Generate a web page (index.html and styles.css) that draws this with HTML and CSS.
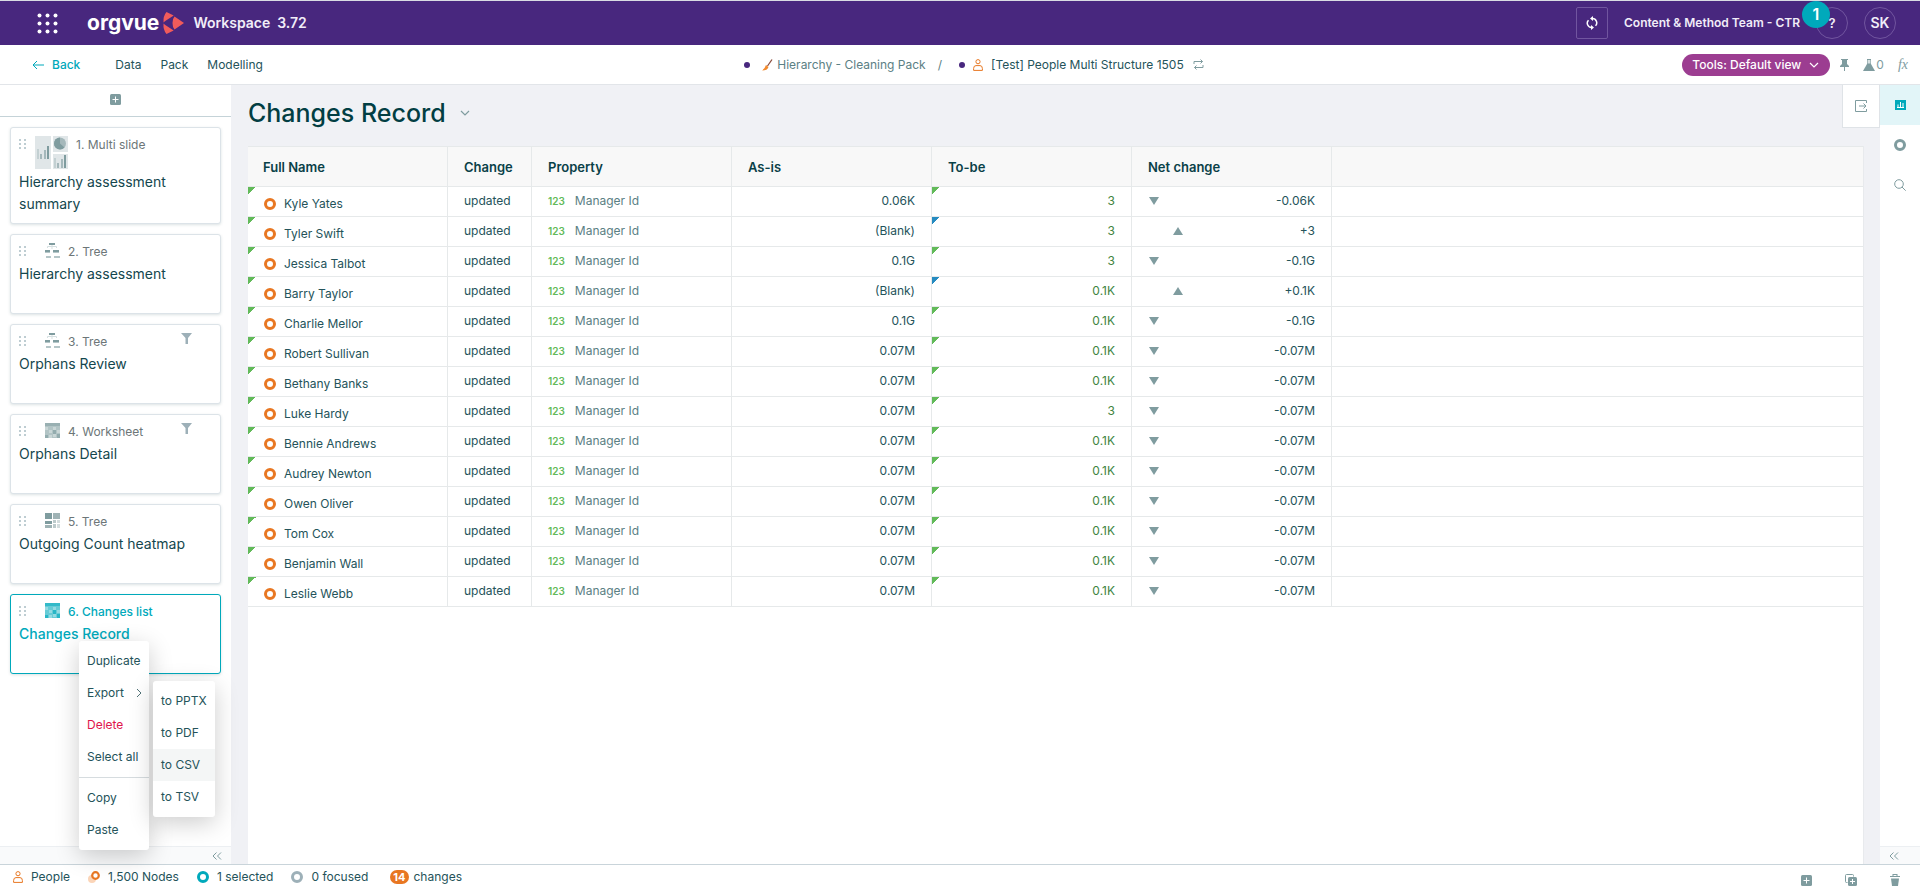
FILE: index.html
```html
<!DOCTYPE html>
<html lang="en">
<head>
<meta charset="utf-8">
<title>Changes Record - Workspace</title>
<link rel="stylesheet" href="styles.css">
</head>
<body>
<svg class="defs" aria-hidden="true">
  <symbol id="person" viewBox="0 0 10 12"><g fill="none" stroke="#e87722"><circle cx="5" cy="2.7" r="2.1"/><path d="M.6 11.4V9.6Q.6 6.6 3 6.6h4q2.400 0 2.400 3v1.800z"/></g></symbol>
  <symbol id="grip" viewBox="0 0 7 10"><g fill="#a9bcc3"><circle cx="1" cy="1" r="1"/><circle cx="6" cy="1" r="1"/><circle cx="1" cy="5" r="1"/><circle cx="6" cy="5" r="1"/><circle cx="1" cy="9" r="1"/><circle cx="6" cy="9" r="1"/></g></symbol>
  <symbol id="plus" viewBox="0 0 11 11"><rect width="11" height="11" rx="1.500" fill="#7f9c9f"/><path d="M5.500 2.500v6M2.500 5.500h6" stroke="#fff"/></symbol>
  <symbol id="tree" viewBox="0 0 15 15"><path d="M7 2v4M2.500 5V3.500h9V5" fill="none" stroke="#d5dfe0"/><path d="M4 0h6v2H4z" fill="#7f9c9f"/><path d="M0 7h5v2H0zM8 7h6v2H8z" fill="#7f9c9f"/><path d="M0 9h5v1H0zM8 9h6v1H8zM1 13h5v2H1zM9 13h6v2H9z" fill="#b5c6c8"/></symbol>
  <symbol id="funnel" viewBox="0 0 11 11"><path d="M0 0h11L7 5v6H4.500V5z" fill="#9db0b8"/></symbol>
  <symbol id="sheet" viewBox="0 0 15 15"><path d="M0 0h15v15H0z" fill="currentColor" opacity=".6"/><path d="M0 0h15v3H0z" fill="currentColor" opacity=".5"/><path d="M0 4h3v3H0zM4 7h3v3H4zM8 4h3v3H8zM12 7h3v3h-3zM8 11h3v3H8zM4 12h3v3H4z" fill="#fff" opacity=".3"/><path d="M8 7h3v4H8zM0 12h3v3H0zM12 11h3v4h-3z" fill="currentColor" opacity=".6"/></symbol>
  <symbol id="heat" viewBox="0 0 15 15"><path d="M0 0h7v6H0zM0 8h7v3H0z" fill="#7f9c9f"/><path d="M8 0h7v6H8zM0 12h7v3H0z" fill="#9fb3b5"/><path d="M8 7h3v3H8zM8 11h3v4H8z" fill="#bccacb"/><path d="M12 7h3v3h-3zM12 11h3v4h-3z" fill="#d3dcdd"/></symbol>
  <symbol id="laquo" viewBox="0 0 10 8"><path d="M4.500.5 1 4l3.500 3.500M9 .5 5.500 4 9 7.500" fill="none" stroke="#7f9c9f"/></symbol>
  <symbol id="chev" viewBox="0 0 10 6"><path d="M1 1l4 4 4-4" fill="none" stroke="currentColor" stroke-width="1.200"/></symbol>
</svg>

<header class="topbar">
  <button class="apps" aria-label="Apps"><svg width="21" height="21" viewBox="0 0 21 21" fill="#fff"><g id="dots"><circle cx="2.500" cy="2.500" r="2"/><circle cx="10.500" cy="2.500" r="2"/><circle cx="18.500" cy="2.500" r="2"/></g><use href="#dots" y="8"/><use href="#dots" y="16"/></svg></button>
  <a class="brand" href="#"><span>orgvue</span><svg width="21" height="22" viewBox="0 0 21 22" fill="#f15b5b"><path d="M3.500 0l7.200 3.600L3 8.500q-1.500 1-2.500 2Q0 4 3.500 0zM3.500 22l7.200-3.600L3 13.500q-1.500-1-2.500-2Q0 18 3.500 22zM11.500 4.500L21 11l-9.500 6.500Q9.500 15.500 9.500 11t2-6.500z"/></svg></a>
  <span class="product">Workspace</span><span class="version">3.72</span>
  <div class="account">
    <button class="square" aria-label="Refresh"><svg width="12" height="14" viewBox="0 0 12 14"><g fill="none" stroke="#fff" stroke-width="1.500"><path d="M6.500 2.500a4.300 4.300 0 0 1 3 7.300M5.500 11.500a4.300 4.300 0 0 1-3-7.300"/></g><path d="M7 0v5L4 2.500zM5 14V9l3 2.500z" fill="#fff"/></svg></button>
    <span class="team">Content &amp; Method Team - CTR</span>
    <button class="round">?<span class="notice">1</span></button>
    <button class="round initials">SK</button>
  </div>
</header>

<nav class="navbar">
  <div class="links">
    <a class="back" href="#"><svg width="12" height="10" viewBox="0 0 12 10"><path d="M12 5H1M5 1L1 5l4 4" fill="none" stroke="#00a9bb"/></svg>Back</a>
    <a href="#">Data</a><a href="#">Pack</a><a href="#">Modelling</a>
  </div>
  <div class="crumbs">
    <i class="dot"></i>
    <svg class="brush" width="11" height="12" viewBox="0 0 11 12"><path d="M10 .5L5.500 7" stroke="#8a4b3c" stroke-width="1.300"/><path d="M4 6l2.500 2Q5.500 11.500 0 11.500 3 9.500 4 6z" fill="#f28a2e"/></svg>
    <a class="parent" href="#">Hierarchy - Cleaning Pack</a>
    <span class="slash">/</span>
    <i class="dot"></i>
    <svg class="dataset" width="10" height="12"><use href="#person"/></svg>
    <a class="current" href="#">[Test] People Multi Structure 1505</a>
    <svg width="11" height="11" viewBox="0 0 11 11" fill="none" stroke="#7f9c9f"><path d="M1 5V2.500h8.500M7.500.5l2 2-2 2M10 6v2.500H1.500M3.500 6.500l-2 2 2 2"/></svg>
  </div>
  <div class="tools">
    <button class="view">Tools: Default view<svg width="10" height="6"><use href="#chev"/></svg></button>
    <button aria-label="Pin"><svg width="9" height="12" viewBox="0 0 9 12" fill="#7f9c9f"><path d="M1 0h7v1H7v4l2 2v1H5v4H4V8H0V7l2-2V1H1z"/></svg></button>
    <button class="flask"><svg width="12" height="12" viewBox="0 0 12 12"><path d="M4 .5h4M4.800.5V5M7.200.5V5" stroke="#7f9c9f"/><path d="M4.300 4.500h3.400L12 12H0z" fill="#7f9c9f"/></svg>0</button>
    <button class="fx">fx</button>
  </div>
</nav>

<div class="workspace">
  <aside class="slides">
    <div class="add"><button aria-label="Add slide"><svg width="11" height="11"><use href="#plus"/></svg></button></div>
    <ol class="cards">
      <li class="card tall"><div class="meta"><svg class="grip" width="7" height="10"><use href="#grip"/></svg><svg width="33" height="33" viewBox="0 0 33 33"><path d="M0 0h16v33H0zM18 0h15v16H18zM18 18h15v15H18z" fill="#e0e6e8"/><circle cx="25" cy="7.500" r="6" fill="#a5b8bb"/><path d="M25 1.500a6 6 0 0 0 0 12z" fill="#7f9c9f"/><path d="M25 7.500l4.500 4A6 6 0 0 1 25 13.500z" fill="#7f9c9f"/><g id="bars"><path d="M2 13h2v10H2z" fill="#c3d0d2"/><path d="M5 18h2v5H5zM9 14h2v9H9z" fill="#a5b8bb"/><path d="M12 10h2v13h-2z" fill="#7f9c9f"/></g><use href="#bars" x="17" y="9"/></svg><span>1. Multi slide</span></div><h2>Hierarchy assessment summary</h2></li>
      <li class="card"><div class="meta"><svg class="grip" width="7" height="10"><use href="#grip"/></svg><svg class="type" width="15" height="15"><use href="#tree"/></svg><span>2. Tree</span></div><h2>Hierarchy assessment</h2></li>
      <li class="card"><div class="meta"><svg class="grip" width="7" height="10"><use href="#grip"/></svg><svg class="type" width="15" height="15"><use href="#tree"/></svg><span>3. Tree</span><svg class="funnel" width="11" height="11"><use href="#funnel"/></svg></div><h2>Orphans Review</h2></li>
      <li class="card"><div class="meta"><svg class="grip" width="7" height="10"><use href="#grip"/></svg><svg class="type" width="15" height="15"><use href="#sheet"/></svg><span>4. Worksheet</span><svg class="funnel" width="11" height="11"><use href="#funnel"/></svg></div><h2>Orphans Detail</h2></li>
      <li class="card"><div class="meta"><svg class="grip" width="7" height="10"><use href="#grip"/></svg><svg class="type" width="15" height="15"><use href="#heat"/></svg><span>5. Tree</span></div><h2>Outgoing Count heatmap</h2></li>
      <li class="card active"><div class="meta"><svg class="grip" width="7" height="10"><use href="#grip"/></svg><svg class="type" width="15" height="15"><use href="#sheet"/></svg><span>6. Changes list</span></div><h2>Changes Record</h2></li>
    </ol>
    <button class="collapse" aria-label="Collapse slides"><svg width="10" height="8"><use href="#laquo"/></svg></button>
  </aside>

  <main class="content">
    <div class="heading">
      <h1>Changes Record</h1>
      <button class="more" aria-label="Title menu"><svg width="10" height="6"><use href="#chev"/></svg></button>
      <button class="exit" aria-label="Open panel"><svg width="12" height="12" viewBox="0 0 12 12" fill="none" stroke="#7f9c9f"><path d="M11.500 3V.5H.5v11h11V9M4 6h7M8.500 3.500L11 6 8.500 8.500"/></svg></button>
    </div>
    <div class="sheet">
      <table>
        <colgroup><col class="c-name"><col class="c-change"><col class="c-wide"><col class="c-wide"><col class="c-wide"><col class="c-wide"><col></colgroup>
        <thead><tr><th>Full Name</th><th>Change</th><th>Property</th><th>As-is</th><th>To-be</th><th>Net change</th><td></td></tr></thead>
        <tbody>
          <tr><td class="name"><i class="ring"></i>Kyle Yates</td><td>updated</td><td class="prop"><b>123</b>Manager Id</td><td class="num">0.06K</td><td class="num to">3</td><td class="num net down">-0.06K</td><td></td></tr>
          <tr><td class="name"><i class="ring"></i>Tyler Swift</td><td>updated</td><td class="prop"><b>123</b>Manager Id</td><td class="num">(Blank)</td><td class="num to new">3</td><td class="num net up">+3</td><td></td></tr>
          <tr><td class="name"><i class="ring"></i>Jessica Talbot</td><td>updated</td><td class="prop"><b>123</b>Manager Id</td><td class="num">0.1G</td><td class="num to">3</td><td class="num net down">-0.1G</td><td></td></tr>
          <tr><td class="name"><i class="ring"></i>Barry Taylor</td><td>updated</td><td class="prop"><b>123</b>Manager Id</td><td class="num">(Blank)</td><td class="num to new">0.1K</td><td class="num net up">+0.1K</td><td></td></tr>
          <tr><td class="name"><i class="ring"></i>Charlie Mellor</td><td>updated</td><td class="prop"><b>123</b>Manager Id</td><td class="num">0.1G</td><td class="num to">0.1K</td><td class="num net down">-0.1G</td><td></td></tr>
          <tr><td class="name"><i class="ring"></i>Robert Sullivan</td><td>updated</td><td class="prop"><b>123</b>Manager Id</td><td class="num">0.07M</td><td class="num to">0.1K</td><td class="num net down">-0.07M</td><td></td></tr>
          <tr><td class="name"><i class="ring"></i>Bethany Banks</td><td>updated</td><td class="prop"><b>123</b>Manager Id</td><td class="num">0.07M</td><td class="num to">0.1K</td><td class="num net down">-0.07M</td><td></td></tr>
          <tr><td class="name"><i class="ring"></i>Luke Hardy</td><td>updated</td><td class="prop"><b>123</b>Manager Id</td><td class="num">0.07M</td><td class="num to">3</td><td class="num net down">-0.07M</td><td></td></tr>
          <tr><td class="name"><i class="ring"></i>Bennie Andrews</td><td>updated</td><td class="prop"><b>123</b>Manager Id</td><td class="num">0.07M</td><td class="num to">0.1K</td><td class="num net down">-0.07M</td><td></td></tr>
          <tr><td class="name"><i class="ring"></i>Audrey Newton</td><td>updated</td><td class="prop"><b>123</b>Manager Id</td><td class="num">0.07M</td><td class="num to">0.1K</td><td class="num net down">-0.07M</td><td></td></tr>
          <tr><td class="name"><i class="ring"></i>Owen Oliver</td><td>updated</td><td class="prop"><b>123</b>Manager Id</td><td class="num">0.07M</td><td class="num to">0.1K</td><td class="num net down">-0.07M</td><td></td></tr>
          <tr><td class="name"><i class="ring"></i>Tom Cox</td><td>updated</td><td class="prop"><b>123</b>Manager Id</td><td class="num">0.07M</td><td class="num to">0.1K</td><td class="num net down">-0.07M</td><td></td></tr>
          <tr><td class="name"><i class="ring"></i>Benjamin Wall</td><td>updated</td><td class="prop"><b>123</b>Manager Id</td><td class="num">0.07M</td><td class="num to">0.1K</td><td class="num net down">-0.07M</td><td></td></tr>
          <tr><td class="name"><i class="ring"></i>Leslie Webb</td><td>updated</td><td class="prop"><b>123</b>Manager Id</td><td class="num">0.07M</td><td class="num to">0.1K</td><td class="num net down">-0.07M</td><td></td></tr>
        </tbody>
      </table>
    </div>
  </main>

  <aside class="rail">
    <button class="on" aria-label="Charts"><svg width="11" height="10" viewBox="0 0 11 10"><path d="M0 0h11v10H0z" fill="#00a9bb"/><path d="M2 7.500h7M3 7V4.500M5.500 7V2M8 7V3" stroke="#fff"/></svg></button>
    <button aria-label="Nodes"><i class="ring grey"></i></button>
    <button aria-label="Search"><svg width="12" height="12" viewBox="0 0 12 12" fill="none" stroke="#7f9c9f"><circle cx="5" cy="5" r="4.300"/><path d="M8 8l3.700 3.700"/></svg></button>
    <button class="collapse" aria-label="Expand panel"><svg width="10" height="8"><use href="#laquo"/></svg></button>
  </aside>
</div>

<footer class="status">
  <span><svg width="10" height="12"><use href="#person"/></svg>People</span>
  <span><svg width="12" height="12" viewBox="0 0 12 12"><circle cx="4" cy="8" r="4" fill="#fbd5b8"/><circle cx="7.500" cy="4.500" r="3.300" fill="#fff" stroke="#e87722" stroke-width="2.200"/></svg>1,500 Nodes</span>
  <span><i class="ring teal"></i>1 selected</span>
  <span><i class="ring pale"></i>0 focused</span>
  <span class="changes"><b>14</b>changes</span>
  <div class="actions">
    <button aria-label="Add"><svg width="11" height="11"><use href="#plus"/></svg></button>
    <button aria-label="Duplicate"><svg width="12" height="12" viewBox="0 0 12 12"><path d="M2.500 8.500H1.500q-1 0-1-1v-6q0-1 1-1h6q1 0 1 1v1" fill="none" stroke="#7f9c9f"/><rect x="3" y="3" width="9" height="9" rx="1.500" fill="#7f9c9f"/><path d="M7.500 5v5M5 7.500h5" stroke="#fff"/></svg></button>
    <button aria-label="Delete"><svg width="10" height="12" viewBox="0 0 10 12" fill="#7f9c9f"><path d="M2.500 0h5v2H10v1H0V2h2.500z"/><path d="M1 4.500h8L8 12H2z"/><path d="M3.500 1h3v1h-3z" fill="#fff"/></svg></button>
  </div>
</footer>

<div class="menu context" role="menu">
  <button role="menuitem">Duplicate</button>
  <button role="menuitem">Export<svg width="6" height="10" viewBox="0 0 6 10"><path d="M1 1l4 4-4 4" fill="none" stroke="#4f7276"/></svg></button>
  <button role="menuitem" class="danger">Delete</button>
  <button role="menuitem">Select all</button>
  <hr>
  <button role="menuitem">Copy</button>
  <button role="menuitem">Paste</button>
</div>
<div class="menu export" role="menu">
  <button role="menuitem">to PPTX</button>
  <button role="menuitem">to PDF</button>
  <button role="menuitem" class="hover">to CSV</button>
  <button role="menuitem">to TSV</button>
</div>
</body>
</html>
```
FILE: styles.css
```css
* { box-sizing: border-box; }
body {
  margin: 0;
  height: 100vh;
  display: flex;
  flex-direction: column;
  font: 12px/16px Inter, "Liberation Sans", sans-serif;
  color: #24535a;
  background: #fff;
  overflow: hidden;
}
button { margin: 0; padding: 0; border: 0; background: none; font: inherit; color: inherit; }
a { color: inherit; text-decoration: none; }
svg { display: block; flex: none; }
.defs { position: absolute; width: 0; height: 0; }

.topbar {
  display: flex;
  align-items: center;
  height: 45px;
  flex: none;
  padding: 0 24px 0 37px;
  border-top: 1px solid #d9dbe3;
  background: #48277e;
  color: #f1edf8;
  font-weight: 600;
}
.brand { display: flex; align-items: center; gap: 4px; margin: 0 9px 0 29px; color: #fff; }
.brand span { font: 700 21px/24px Inter, sans-serif; }
.product, .version { font-size: 14px; }
.version { margin-left: 7px; }
.account { display: flex; align-items: center; gap: 16px; margin-left: auto; }
.square, .round {
  display: flex;
  align-items: center;
  justify-content: center;
  width: 32px;
  height: 32px;
  border: 1px solid #71559f;
  border-radius: 2px;
}
.round { position: relative; border-radius: 50%; font-size: 13px; }
.initials { font-size: 14px; }
.notice {
  position: absolute;
  top: -7px;
  left: -15px;
  width: 28px;
  height: 27px;
  border-radius: 50%;
  background: #00a9bb;
  color: #fff;
  font-size: 16px;
  line-height: 27px;
}

.navbar {
  display: grid;
  grid-template-columns: 1fr auto 1fr;
  align-items: center;
  height: 40px;
  flex: none;
  padding: 0 12px 0 32px;
  border-bottom: 1px solid #e2e5e9;
}
.links { display: flex; gap: 19px; }
.back { display: flex; align-items: center; gap: 8px; margin-right: 16px; color: #00a9bb; font-weight: 500; }
.crumbs { display: flex; align-items: center; padding-left: 8px; }
.dot { width: 6px; height: 6px; border-radius: 50%; background: #48277e; }
.brush { margin: 0 4px 0 12px; }
.dataset { margin: 0 8px; }
.parent, .slash { color: #5b8084; }
.slash { margin: 0 17px 0 12px; }
.current { margin-right: 9px; }
.tools { display: flex; align-items: center; justify-content: flex-end; color: #7f9c9f; }
.view {
  display: flex;
  align-items: center;
  gap: 8px;
  height: 22px;
  margin-right: 10px;
  padding: 0 11px 0 10px;
  border-radius: 11px;
  background: #9c3d91;
  color: #fff;
  font-weight: 500;
}
.flask { display: flex; align-items: center; gap: 1px; margin: 0 14px; }
.fx { font: italic 14px/16px "Liberation Serif", serif; }

.workspace { display: flex; flex: 1; min-height: 0; border-bottom: 1px solid #c9d4da; background: #f0f1f5; }
.slides { display: flex; flex-direction: column; width: 231px; flex: none; background: #fff; }
.add { display: flex; align-items: center; justify-content: center; height: 32px; padding-bottom: 3px; border-bottom: 1px solid #c5d3d8; }
.cards { display: flex; flex-direction: column; gap: 10px; flex: 1; margin: 0; padding: 10px 10px 0; list-style: none; }
.card {
  min-height: 80px;
  padding: 8px;
  border: 1px solid #dce3e8;
  border-radius: 3px;
  background: #fff;
  box-shadow: 0 1px 3px #0c3c4626;
}
.card.tall { min-height: 97px; }
.meta { display: flex; align-items: flex-start; color: #6c7678; }
.grip { margin: 3px 9px 0 0; }
.type { margin-left: 10px; color: #7f9c9f; }
.meta span { margin: 1px 0 0 8px; }
.funnel { margin: 0 20px 0 auto; }
.card h2 { margin: 3px 0 0; font-size: 14px; line-height: 22px; font-weight: 400; color: #14474e; }
.card.tall h2 { margin-top: 2px; }
.active { border-color: #00a9bb; }
.active .meta, .active .type, .card.active h2 { color: #00a9bb; font-weight: 500; }
.collapse { display: flex; align-items: center; justify-content: flex-end; height: 18px; flex: none; padding-right: 9px; border-top: 1px solid #eceff2; background: #f9fafb; }

.content { display: flex; flex-direction: column; flex: 1; min-width: 0; }
.heading { display: flex; align-items: center; height: 61px; padding-left: 17px; color: #023e43; }
h1 { margin: 0; padding-bottom: 6px; font-size: 25px; line-height: 32px; font-weight: 500; }
.more { margin: 0 auto 6px 14px; color: #7f9c9f; }
.exit { display: flex; justify-content: center; align-self: flex-start; width: 38px; height: 43px; padding-top: 15px; border: solid #dfe3e7; border-width: 0 1px 1px; background: #fff; }
.sheet { flex: 1; margin: 0 16px 0 17px; border-right: 1px solid #e8eaed; background: #fff; }
table { width: 100%; table-layout: fixed; border-collapse: separate; border-spacing: 0; }
.c-name { width: 200px; }
.c-change { width: 84px; }
.c-wide { width: 200px; }
th, td { padding: 0 16px; border: solid #e6e9ea; border-width: 0 1px 1px 0; text-align: left; vertical-align: middle; }
th:last-child, td:last-child { border-right: 0; }
thead th, thead td { height: 41px; border-top-width: 1px; background: #f8f8f8; color: #0a4148; font-size: 13px; font-weight: 600; }
th:first-child { padding-left: 15px; }
tbody td { height: 30px; padding-bottom: 2px; }
tbody .name { padding: 5px 0 0 16px; }
.name, .to { background: linear-gradient(135deg, #62ba59 50%, transparent 50%) no-repeat 0 0 / 8px 8px; }
.new { background-image: linear-gradient(135deg, #268bc0 50%, transparent 50%); }
.ring { display: inline-block; width: 12px; height: 12px; border: 3px solid #e87722; border-radius: 50%; flex: none; }
.name .ring { margin-right: 8px; vertical-align: -2px; }
.grey { border-color: #7f9c9f; }
.teal { border-color: #00a9bb; }
.pale { border-color: #9db0b8; }
.prop { color: #5b8084; }
.prop b { margin-right: 10px; font-size: 10px; font-weight: 600; color: #62ba59; }
.num { text-align: right; }
.to { color: #3e8440; }
.net::before { content: ""; float: left; margin: 4px 0 0 1px; border: solid transparent; border-width: 0 5px; }
.down::before { border-top: 8px solid #7f9c9f; }
.up::before { margin-left: 25px; border-bottom: 8px solid #7f9c9f; }

.rail { display: flex; flex-direction: column; width: 40px; flex: none; background: #fff; }
.rail button:not(.collapse) { display: flex; align-items: center; justify-content: center; height: 40px; }
.rail .on { background: #e2f5f8; }
.rail .collapse { margin-top: auto; padding-right: 21px; }

.status { display: flex; align-items: flex-start; gap: 18px; height: 28px; flex: none; padding: 4px 20px 0 13px; }
.status span { display: flex; align-items: center; gap: 8px; }
.status .changes { gap: 5px; margin-left: 4px; }
.changes b { padding: 0 3px; border-radius: 7px; background: #e87722; color: #fff; font-size: 11px; line-height: 14px; }
.actions { display: flex; gap: 33px; margin: 5px 0 0 auto; }

.menu { position: absolute; display: flex; flex-direction: column; padding: 4px 0; border-radius: 3px; background: #fff; box-shadow: 0 6px 24px #00000033; }
.menu button { display: flex; align-items: center; justify-content: space-between; height: 32px; padding: 0 7px 0 8px; }
.menu hr { width: 100%; margin: 4px 0; border: 0; border-top: 1px solid #d6dcdf; }
.menu .danger { color: #e0144c; }
.menu .hover { background: #f4f6f6; }
.context { left: 79px; top: 641px; width: 70px; }
.export { left: 153px; top: 681px; width: 62px; }
```
